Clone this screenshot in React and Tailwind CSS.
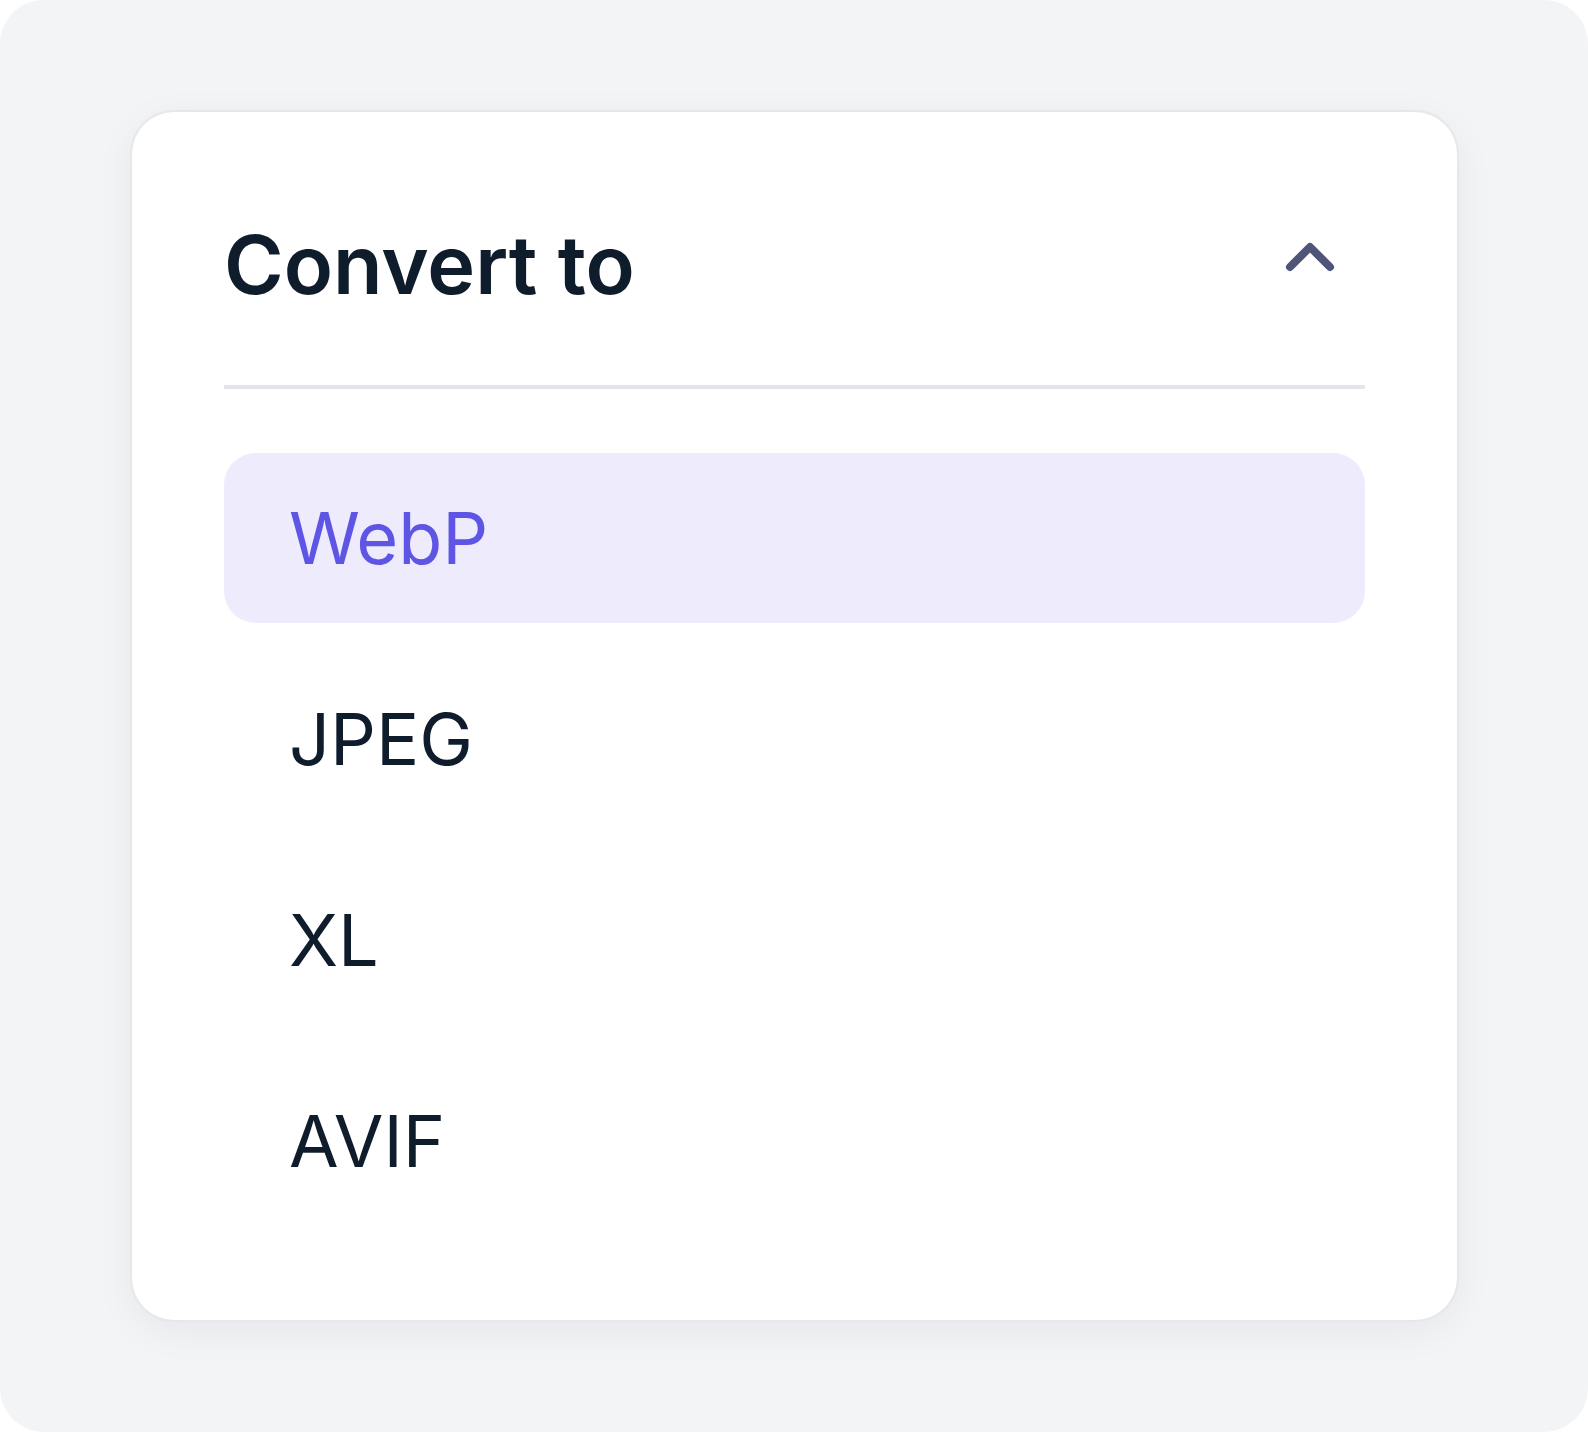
import React, { useState } from "react";

const FORMATS = ["WebP", "JPEG", "XL", "AVIF"];

const ChevronUp = () => (
  <svg
    width="64"
    height="40"
    viewBox="0 0 64 40"
    fill="none"
    stroke="#4f5578"
    strokeWidth="8"
    strokeLinecap="round"
    strokeLinejoin="round"
  >
    <path d="M12 30 L32 10 L52 30" />
  </svg>
);

const App = () => {
  const [selected, setSelected] = useState("WebP");

  return (
    <div className="w-[1588px] h-[1432px] bg-white">
      <div className="w-full h-full rounded-[44px] bg-[#f3f4f6] pt-[112px] pl-[132px]">
        <div
          className="w-[1325px] h-[1208px] rounded-[42px] bg-white px-[92px] pt-[91px] shadow-[0_0_0_2px_#e6e7eb,0_10px_40px_rgba(17,24,39,0.06)]"
          style={{ fontFamily: "Inter, 'Noto Sans', sans-serif" }}
        >
          <div className="flex items-center justify-between h-[124px]">
            <h2 className="text-[81px] font-semibold leading-none text-[#0f1c2b] tracking-[0px]">
              Convert to
            </h2>
            <button className="mr-[23px] mb-[16px]">
              <ChevronUp />
            </button>
          </div>
          <div className="mt-[58px] h-[4px] bg-[#e4e4ea]" />
          <ul className="mt-[64px] flex flex-col gap-[31px]">
            {FORMATS.map((f) => (
              <li key={f}>
                <button
                  onClick={() => setSelected(f)}
                  className={
                    "w-full h-[170px] rounded-[32px] pl-[65px] text-left text-[72px] leading-none " +
                    (selected === f
                      ? "bg-[#eeebfd] text-[#5f55e4]"
                      : "bg-transparent text-[#0f1c2b]")
                  }
                >
                  {f}
                </button>
              </li>
            ))}
          </ul>
        </div>
      </div>
    </div>
  );
};

export default App;
